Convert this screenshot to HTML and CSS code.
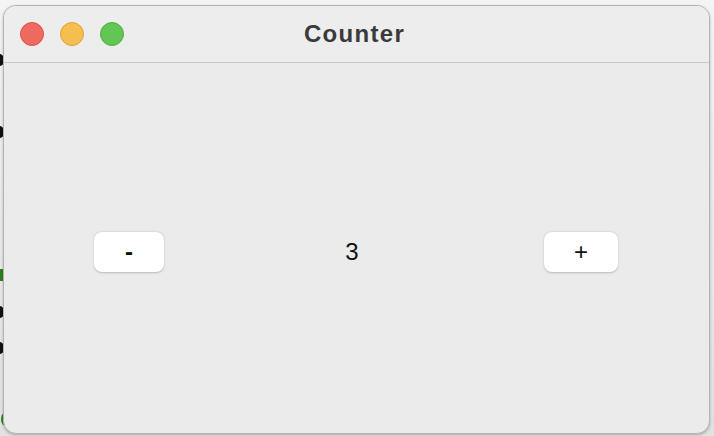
FILE: index.html
```html
<!DOCTYPE html>
<html>
<head>
<meta charset="utf-8">
<link rel="stylesheet" href="styles.css">
</head>
<body>
<div class="desktop">
  <span class="mark dot m1"></span>
  <span class="mark dot m2"></span>
  <span class="mark green m3"></span>
  <span class="mark dot m4"></span>
  <span class="mark dot m5"></span>
  <span class="mark arc m6"></span>
  <div class="window">
    <div class="titlebar">
      <div class="lights">
        <span class="light red"></span>
        <span class="light yellow"></span>
        <span class="light green-l"></span>
      </div>
      <div class="title">Counter</div>
    </div>
    <div class="content">
      <button class="btn btn-minus">-</button>
      <span class="count">3</span>
      <button class="btn btn-plus">+</button>
    </div>
  </div>
</div>
</body>
</html>
```
FILE: styles.css
```css
html, body {
  margin: 0;
  padding: 0;
}
body {
  width: 714px;
  height: 436px;
  overflow: hidden;
  background: linear-gradient(#f4f4f4, #e2e2e2);
  font-family: "Liberation Sans", Arial, sans-serif;
}
.desktop {
  position: relative;
  width: 714px;
  height: 436px;
  padding: 5px 4px 2px 3px;
  box-sizing: border-box;
  display: flex;
}
.mark {
  position: absolute;
  left: 0;
  z-index: 0;
}
.dot {
  width: 8px;
  height: 12px;
  border-radius: 50%;
  background: #111;
  left: -4px;
}
.m1 { top: 54px; }
.m2 { top: 126px; }
.m4 { top: 306px; }
.m5 { top: 342px; }
.green {
  width: 3px;
  height: 12px;
  background: #2e7d1e;
  top: 269px;
}
.arc {
  top: 412px;
  left: 1px;
  width: 10px;
  height: 14px;
  border-radius: 50%;
  border: 2px solid #2e7d1e;
  border-right-color: transparent;
  border-top-color: transparent;
  box-sizing: border-box;
}
.window {
  position: relative;
  z-index: 1;
  flex: 1;
  display: flex;
  flex-direction: column;
  background: #ebebeb;
  border: 1px solid #b4b4b4;
  border-radius: 13px;
  box-shadow: 0 1px 3px rgba(0,0,0,0.25);
  overflow: hidden;
}
.titlebar {
  position: relative;
  height: 56px;
  flex: none;
  background: #ededed;
  border-bottom: 1px solid #cacaca;
  display: flex;
  align-items: center;
  justify-content: center;
}
.lights {
  position: absolute;
  left: 16px;
  top: 16px;
  display: flex;
  gap: 16px;
}
.light {
  width: 24px;
  height: 24px;
  border-radius: 50%;
  box-sizing: border-box;
}
.red { background: #ee6a5f; border: 1px solid #d9534a; }
.yellow { background: #f5bf4f; border: 1px solid #dea23a; }
.green-l { background: #62c554; border: 1px solid #4fae42; }
.title {
  font-size: 24px;
  font-weight: bold;
  color: #3a3a3a;
  letter-spacing: 1.3px;
  margin-left: -4px;
}
.content {
  flex: 1;
  display: flex;
  align-items: center;
  justify-content: space-between;
  padding: 7px 91px 0 90px;
}
.btn {
  height: 40px;
  border: none;
  border-radius: 8px;
  background: #ffffff;
  box-shadow: 0 0.5px 2px rgba(0,0,0,0.22);
  font-family: "Liberation Sans", Arial, sans-serif;
  font-size: 24px;
  color: #111;
  padding: 0;
}
.btn-minus { width: 70px; font-weight: bold; }
.btn-plus { width: 74px; }
.count {
  font-size: 24px;
  color: #111;
  margin-left: -4px;
}
```
